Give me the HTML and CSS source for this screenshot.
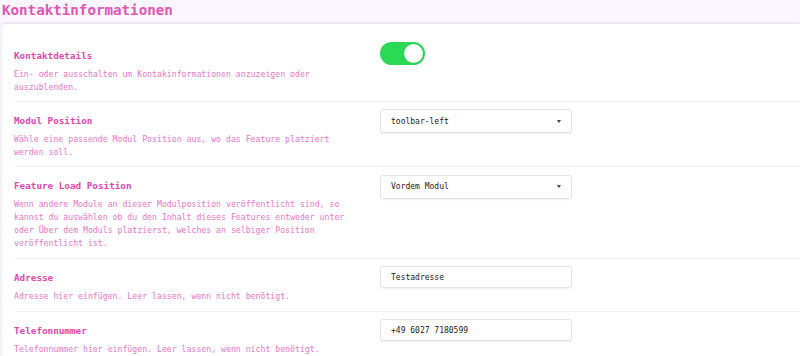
FILE: index.html
```html
<!DOCTYPE html>
<html lang="de">
<head>
    <meta charset="UTF-8" />
    <meta name="viewport" content="width=device-width, initial-scale=1.0" />
    <title>Kontaktinformationen</title>
    <link rel="stylesheet" href="styles.css">
</head>
<body>
    <h1>Kontaktinformationen</h1>
    <div class="card">
        <div class="field">
            <div class="info">
                <h2>Kontaktdetails</h2>
                <p>Ein- oder ausschalten um Kontakinformationen anzuzeigen oder auszublenden.</p>
            </div>
            <div class="control">
                <label class="switch">
                    <input type="checkbox" checked />
                    <span class="slider"></span>
                </label>
            </div>
        </div>

        <div class="field">
            <div class="info">
                <h2>Modul Position</h2>
                <p>Wähle eine passende Modul Position aus, wo das Feature platziert werden soll.</p>
            </div>
            <div class="control">
                <div class="select">
                    <span>toolbar-left</span>
                    <span class="caret"></span>
                </div>
            </div>
        </div>

        <div class="field">
            <div class="info">
                <h2>Feature Load Position</h2>
                <p>Wenn andere Module an dieser Modulposition veröffentlicht sind, so kannst du auswählen ob du den Inhalt dieses Features entweder unter oder Über dem Moduls platzierst, welches an selbiger Position veröffentlicht ist.</p>
            </div>
            <div class="control">
                <div class="select">
                    <span>Vordem Modul</span>
                    <span class="caret"></span>
                </div>
            </div>
        </div>

        <div class="field">
            <div class="info">
                <h2>Adresse</h2>
                <p>Adresse hier einfügen. Leer lassen, wenn nicht benötigt.</p>
            </div>
            <div class="control">
                <input type="text" class="text" value="Testadresse" />
            </div>
        </div>

        <div class="field">
            <div class="info">
                <h2>Telefonnummer</h2>
                <p>Telefonnummer hier einfügen. Leer lassen, wenn nicht benötigt.</p>
            </div>
            <div class="control">
                <input type="text" class="text" value="+49 6027 7180599" />
            </div>
        </div>
    </div>
</body>
</html>
```

FILE: styles.css
```css
:root {
    --pink: #dc48ad;
    --pink-light: #e876c6;
    --green: #2bd955;
    --mono: 'DejaVu Sans Mono', 'Liberation Mono', monospace;
}

* {
    box-sizing: border-box;
    margin: 0;
    padding: 0;
}

body {
    font-family: var(--mono);
    background: #f9f6fd;
    height: 356px;
    overflow: hidden;
    color: #333;
}

h1 {
    font-size: 14.2px;
    line-height: 20px;
    font-weight: bold;
    color: #e055b6;
    padding: 0 2px;
    height: 24px;
}

.card {
    background: #fff;
    margin-left: 2px;
    border-radius: 4px 0 0 0;
    box-shadow: 0 -1px 3px rgba(120, 90, 160, 0.18);
    padding: 0 0 0 12px;
    min-height: 400px;
}

.field {
    display: grid;
    grid-template-columns: 340px 192px;
    column-gap: 26px;
    padding: 12px 0 8px;
    border-bottom: 1px solid #f1eff3;
}

.field:first-child {
    padding-top: 25px;
    padding-bottom: 7px;
}

.info h2 {
    font-size: 9.3px;
    line-height: 13px;
    font-weight: bold;
    color: var(--pink);
    margin-bottom: 6px;
}

.info p {
    font-size: 8.2px;
    line-height: 12.85px;
    color: var(--pink-light);
}

.control {
    margin-top: -4.5px;
}

.switch {
    position: relative;
    display: inline-block;
    width: 45px;
    height: 23px;
    margin-top: -3px;
}

.switch input {
    display: none;
}

.slider {
    position: absolute;
    inset: 0;
    background: var(--green);
    border-radius: 12px;
}

.slider::after {
    content: "";
    position: absolute;
    right: 2px;
    top: 2px;
    width: 19px;
    height: 19px;
    border-radius: 50%;
    background: #fff;
    box-shadow: 0 0 1px rgba(0, 0, 0, 0.3);
}

.select,
.text {
    display: flex;
    align-items: center;
    justify-content: space-between;
    width: 192px;
    height: 24px;
    padding: 0 10px;
    border: 1px solid #e3e3e6;
    border-radius: 3px;
    background: #fff;
    box-shadow: 0 1px 2px rgba(0, 0, 0, 0.06);
    font-family: var(--mono);
    font-size: 8px;
    color: #222;
}

.text {
    height: 22px;
}

.caret {
    width: 0;
    height: 0;
    border-left: 2.5px solid transparent;
    border-right: 2.5px solid transparent;
    border-top: 3px solid #444;
}
```
